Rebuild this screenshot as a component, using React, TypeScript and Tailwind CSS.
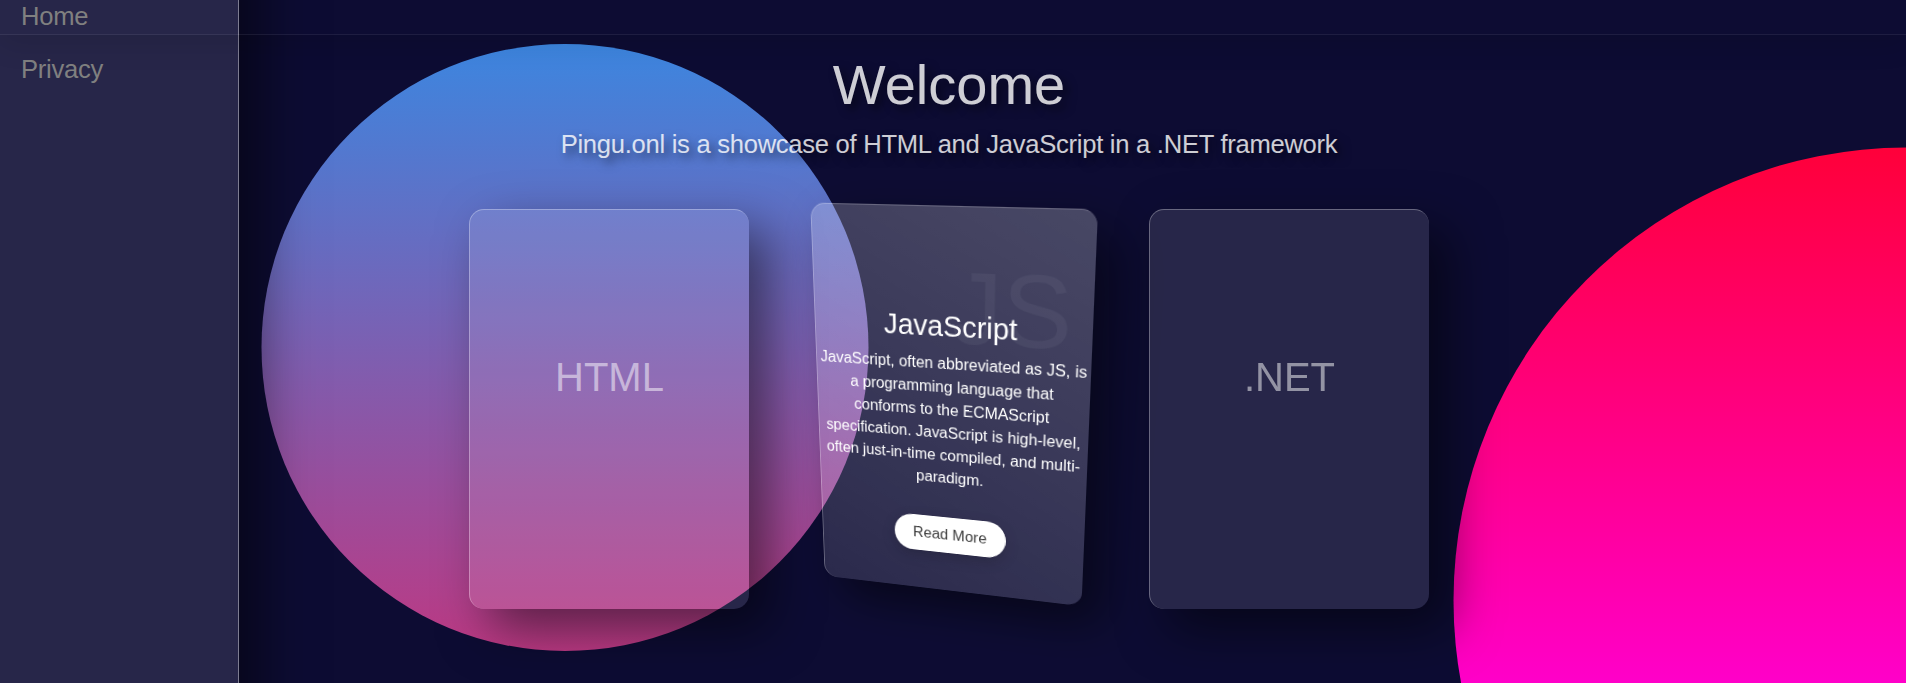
import type { ReactNode } from "react";

const shell =
  "relative h-[400px] w-[280px] shrink-0 overflow-hidden rounded-[15px] border-l border-t border-white/30 bg-white/[0.11] text-center text-white shadow-[20px_20px_50px_rgba(0,0,0,0.5)]";

function Card({ title }: { title: string }) {
  return (
    <article className={`${shell} pt-[143px]`}>
      <h2 className="text-[40px] leading-[48px] text-white/50">{title}</h2>
    </article>
  );
}

function TiltedCard({ mark, title, children }: { mark: string; title: string; children: ReactNode }) {
  return (
    <article
      className={`${shell} px-[3px] pt-[98px] [transform:perspective(1000px)_rotateX(-16.5deg)_rotateY(-14.5deg)]`}
    >
      <span className="absolute right-5 top-[36px] text-[101px] leading-[120px] text-white/5">{mark}</span>
      <h3 className="relative mb-2 text-[28.8px] leading-[34.5px]">{title}</h3>
      <p className="relative mb-4 text-base leading-6 tracking-[-0.02px]">{children}</p>
      <a
        href="#"
        className="relative mt-[15px] inline-block rounded-[20px] bg-white px-5 py-2 text-base leading-6 text-[#333] shadow-[0_5px_15px_rgba(0,0,0,0.2)]"
      >
        Read More
      </a>
      <div className="pointer-events-none absolute -left-px -top-px h-[400px] w-[280px] bg-[linear-gradient(28deg,rgba(255,255,255,0.011),rgba(255,255,255,0.15))]" />
    </article>
  );
}

export default function App() {
  return (
    <div className="relative h-[683px] w-[1906px] overflow-hidden bg-[#0d0c33] font-['Liberation_Sans',Arial,sans-serif]">
      <div className="absolute inset-x-0 -top-[85px] h-[950px] bg-[linear-gradient(#2196f3,#e91e63)] [clip-path:circle(303.5px_at_565px_432.5px)]" />
      <div className="absolute inset-x-0 -top-[38px] h-[924px] bg-[linear-gradient(#ff0008,#f0f)] [clip-path:circle(453px_at_1906.5px_638.5px)]" />

      <aside className="absolute -bottom-20 -top-20 left-0 w-[239px] border-r border-white/40 bg-white/[0.11] pl-[21px] pt-20 text-[25.6px] leading-[38px] tracking-[-0.28px] text-[#808080] shadow-[20px_20px_50px_rgba(0,0,0,0.5)]">
        <nav className="-mt-[3px] flex flex-col gap-[15px]">
          <a href="#">Home</a>
          <a href="#">Privacy</a>
        </nav>
      </aside>
      <header className="absolute inset-x-0 top-0 h-[35px] border-b border-white/[0.07] shadow-[0_8px_30px_rgba(0,0,0,0.12)]" />

      <main className="relative flex w-[1898px] flex-col items-center">
        <h1 className="mt-[51px] text-[56px] leading-[67px] text-white/80 [text-shadow:5px_5px_10px_rgba(0,0,0,0.5)]">
          Welcome
        </h1>
        <p className="mt-[7px] text-[25.6px] leading-[38px] tracking-[-0.28px] text-white/80 [text-shadow:5px_5px_10px_rgba(0,0,0,0.5)]">
          Pingu.onl is a showcase of HTML and JavaScript in a .NET framework
        </p>
        <section className="mt-[46px] flex gap-[60px]">
          <Card title="HTML" />
          <TiltedCard mark="JS" title="JavaScript">
            JavaScript, often abbreviated as JS, is a programming language that conforms to the ECMAScript
            specification. JavaScript is high-level, often just-in-time compiled, and multi-paradigm.
          </TiltedCard>
          <Card title=".NET" />
        </section>
      </main>
    </div>
  );
}
